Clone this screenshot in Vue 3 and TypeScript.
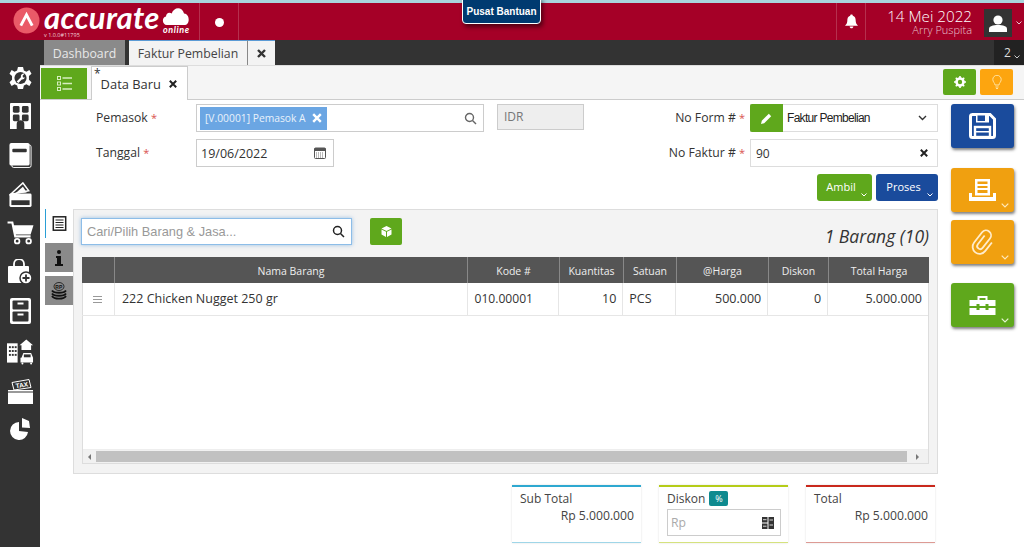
<script setup lang="ts">
interface Column {
  label: string
  width: number
}

const columns: Column[] = [
  { label: '', width: 33 },
  { label: 'Nama Barang', width: 353 },
  { label: 'Kode #', width: 92 },
  { label: 'Kuantitas', width: 64 },
  { label: 'Satuan', width: 53 },
  { label: '@Harga', width: 92 },
  { label: 'Diskon', width: 60 },
  { label: 'Total Harga', width: 100 }
]
</script>

<template>
  <div class="page">
    <div class="strip"></div>

    <!-- header -->
    <header class="header">
      <div class="logo">
        <svg class="logo-mark" width="27" height="27" viewBox="0 0 26 26">
          <circle cx="13" cy="13" r="12.5" fill="#ea5a68" />
          <path d="M7.5 18 L13 7.5 L18.5 18" fill="none" stroke="#fff" stroke-width="2.8" />
        </svg>
        <div class="logo-words">
          <span class="logo-name">accurate</span>
          <span class="logo-version">v 1.0.0#11795</span>
        </div>
        <div class="logo-cloud">
          <svg width="29" height="19" viewBox="0 0 30 20">
            <path d="M6 20 C1 20 0 12 5 11 C5 7 9 6 11 8 C13 1 22 0 24 8 C30 8 31 20 24 20 Z" fill="#fff" />
          </svg>
          <span>online</span>
        </div>
      </div>
      <div class="dot-cell"><i></i></div>
      <div class="spacer"></div>
      <div class="bell-cell">
        <svg width="13" height="15" viewBox="0 0 14 15">
          <path d="M7 0 C8 0 8.4 .6 8.4 1.3 C10.8 2 11.5 4 11.5 6.500 C11.5 9 12.3 10.5 14 12 L0 12 C1.7 10.5 2.5 9 2.5 6.5 C2.5 4 3.2 2 5.6 1.3 C5.6 .6 6 0 7 0 Z M5 13 L9 13 C9 15.5 5 15.5 5 13 Z" fill="#fff" />
        </svg>
      </div>
      <div class="who">
        <span class="who-date">14 Mei 2022</span>
        <span class="who-name">Arry Puspita</span>
      </div>
      <div class="avatar">
        <svg width="18" height="17" viewBox="0 0 18 17">
          <circle cx="9" cy="5" r="4.6" fill="#fff" />
          <path d="M0 17 V14 C0 11 4 10 9 10 C14 10 18 11 18 14 V17 Z" fill="#fff" />
        </svg>
      </div>
      <svg class="avatar-caret" width="6" height="4" viewBox="0 0 6 4">
        <path d="M.5 .5 L3 3 L5.5 .5" fill="none" stroke="#e8c8d0" stroke-width="1" />
      </svg>
    </header>
    <div class="help">Pusat Bantuan</div>

    <!-- page tabs -->
    <nav class="tabs">
      <div class="tab tab-off">Dashboard</div>
      <div class="tab tab-on">Faktur Pembelian</div>
      <div class="tab tab-close">
        <svg width="9" height="9" viewBox="0 0 9 9"><path d="M1 1 L8 8 M8 1 L1 8" stroke="#333" stroke-width="2.4" /></svg>
      </div>
      <div class="tab-count">
        2
        <svg width="6" height="4" viewBox="0 0 6 4"><path d="M.5 .5 L3 3 L5.5 .5" fill="none" stroke="#ccc" stroke-width="1" /></svg>
      </div>
    </nav>

    <div class="body">
      <!-- side menu -->
      <aside class="side">
        <svg width="23" height="22" viewBox="0 0 26 26">
          <path d="M10 0 L16 0 L17 4 L20 5.500 L23.500 3.500 L26 8 L23 10.500 L23 15 L26 18 L23.500 22.500 L20 20.500 L17 22 L16 26 L10 26 L9 22 L6 20.500 L2.500 22.500 L0 18 L3 15 L3 10.500 L0 8 L2.500 3.500 L6 5.500 L9 4 Z" fill="#fff" />
          <circle cx="13" cy="13" r="7.2" fill="#333" />
          <path d="M8.500 17 L13.500 12 A3.500 3.500 0 0 1 18 7.800 L15.500 10.300 L16 12.300 L18.300 12.500 A3.800 3.800 0 0 1 14.500 14.800 L10.500 19 Z" fill="#fff" />
        </svg>
        <svg width="21" height="26" viewBox="0 0 22 27">
          <path d="M0 1 Q0 0 1 0 H21 Q22 0 22 1 V27 H15 V22 A4 4 0 0 0 7 22 V27 H0 Z" fill="#fff" />
          <rect x="3" y="3" width="7" height="7" rx="1.5" fill="#333" />
          <rect x="12.500" y="3" width="7" height="7" rx="1.5" fill="#333" />
          <rect x="3" y="12" width="7" height="7" rx="1.5" fill="#333" />
          <rect x="12.500" y="12" width="7" height="7" rx="1.5" fill="#333" />
        </svg>
        <svg width="23" height="25" viewBox="0 0 23 26">
          <rect x="2.500" y="2" width="20" height="23.5" rx="2" fill="none" stroke="#fff" stroke-width="1" />
          <rect x="0" y="0" width="21" height="23.5" rx="2" fill="#fff" />
          <rect x="3" y="6" width="15" height="3.5" rx="1" fill="#333" />
        </svg>
        <svg width="23" height="25" viewBox="0 0 23 26">
          <path d="M1 13 L14 1 L20 9 Z" fill="none" stroke="#fff" stroke-width="1.6" />
          <path d="M6 12 L14 5 L18 11 Z" fill="#fff" />
          <rect x="0" y="12" width="23" height="14" rx="1.5" fill="#fff" />
          <rect x="2" y="19" width="19" height="5" fill="#333" />
        </svg>
        <svg width="27" height="24" viewBox="0 0 27 25">
          <path d="M0 1.500 H5 L8 16 H24" fill="none" stroke="#fff" stroke-width="2.2" />
          <path d="M6 4.500 H27 L24 14 H8 Z" fill="#fff" />
          <circle cx="10" cy="21" r="2.4" fill="none" stroke="#fff" stroke-width="1.8" />
          <circle cx="22" cy="21" r="2.4" fill="none" stroke="#fff" stroke-width="1.8" />
        </svg>
        <svg width="24" height="25" viewBox="0 0 24 25">
          <path d="M6 8 V5 A5 5 0 0 1 16 5 V8" fill="none" stroke="#fff" stroke-width="1.8" />
          <path d="M1 7 H20 Q21 7 21 8 V24 H1 Q0 24 0 23 V8 Q0 7 1 7 Z" fill="#fff" />
          <circle cx="18" cy="19" r="6" fill="#fff" stroke="#333" stroke-width="1.5" />
          <path d="M18 15.500 V22.500 M14.500 19 H21.500" stroke="#333" stroke-width="1.8" />
        </svg>
        <svg width="21" height="26" viewBox="0 0 21 26">
          <rect x="0" y="0" width="21" height="26" rx="2" fill="#fff" />
          <rect x="2.500" y="2.500" width="16" height="9" rx="1" fill="#333" />
          <rect x="2.500" y="13.500" width="16" height="10" rx="1" fill="#333" />
          <rect x="7.500" y="4.500" width="6" height="2" fill="#fff" />
          <rect x="7.500" y="15.500" width="6" height="2" fill="#fff" />
        </svg>
        <svg width="27" height="27" viewBox="0 0 28 27">
          <rect x="0" y="5" width="11" height="20" fill="#fff" />
          <g fill="#333">
            <rect x="2" y="8" width="2" height="2" /><rect x="5" y="8" width="2" height="2" /><rect x="8" y="8" width="2" height="2" />
            <rect x="2" y="12" width="2" height="2" /><rect x="5" y="12" width="2" height="2" /><rect x="8" y="12" width="2" height="2" />
            <rect x="2" y="16" width="2" height="2" /><rect x="5" y="16" width="2" height="2" /><rect x="8" y="16" width="2" height="2" />
          </g>
          <path d="M13 7 L20 1 L27 7 H25 V12 H15 V7 Z" fill="#fff" />
          <path d="M15 20 L17 15 H25 L27 20 V25 H14 V20 Z" fill="#fff" />
          <rect x="17.500" y="16.500" width="7" height="3" fill="#333" />
          <circle cx="16" cy="26" r="1" fill="#fff" /><circle cx="25" cy="26" r="1" fill="#fff" />
        </svg>
        <svg width="25" height="25" viewBox="0 0 25 25">
          <path d="M4 3.500 L21 .5 L23 8.500 L6 11 Z" fill="none" stroke="#fff" stroke-width="1" />
          <text class="tax" x="7.500" y="8.500" transform="rotate(-9 13 6)">TAX</text>
          <rect x="0" y="11" width="25" height="1.500" fill="#fff" />
          <rect x="0" y="13.500" width="25" height="11.500" fill="#fff" />
        </svg>
        <svg width="20" height="22" viewBox="0 0 20 22">
          <path d="M9 4 A9 9 0 1 0 18 14 L9 13 Z" fill="#fff" />
          <path d="M12 0 L19 3 L20 10 L12 9.500 Z" fill="#fff" />
        </svg>
      </aside>

      <main class="main">
        <div class="toolbar">
          <button class="menu-btn">
            <svg width="15" height="15" viewBox="0 0 15 15" fill="none" stroke="#d6eec0">
              <rect x=".5" y=".5" width="3" height="3" />
              <rect x=".5" y="6" width="3" height="3" />
              <rect x=".5" y="11.500" width="3" height="3" />
              <path d="M5.500 2 H15 M5.500 7.500 H15 M5.500 13 H15" stroke-width="1.5" />
            </svg>
          </button>
          <div class="doc-tab">
            <sup>*</sup>Data Baru
            <svg width="8" height="8" viewBox="0 0 8 8"><path d="M.8 .8 L7.2 7.2 M7.2 .8 L.8 7.2" stroke="#222" stroke-width="2" /></svg>
          </div>
          <div class="spacer"></div>
          <button class="tool-btn green">
            <svg width="12" height="12" viewBox="0 0 12 12">
              <circle cx="6" cy="6" r="3.5" fill="none" stroke="#fff" stroke-width="2.6" />
              <path d="M6 0 V12 M0 6 H12 M1.800 1.800 L10.200 10.200 M10.200 1.800 L1.800 10.200" stroke="#fff" stroke-width="1.6" stroke-dasharray="2 8" />
            </svg>
          </button>
          <button class="tool-btn orange">
            <svg width="10" height="14" viewBox="0 0 10 14" fill="none" stroke="#ffe1a0" stroke-width="1">
              <path d="M3 10 C3 8 .8 7 .8 4.500 A4.200 4.200 0 0 1 9.200 4.500 C9.200 7 7 8 7 10 Z" />
              <path d="M3.500 12 H6.500 M4 13.500 H6" />
            </svg>
          </button>
        </div>

        <div class="work">
          <div class="work-left">
            <section class="form">
              <div class="form-col">
                <div class="field">
                  <label class="label-left">Pemasok <b>*</b></label>
                  <div class="input supplier">
                    <span class="chip">[V.00001] Pemasok A
                      <svg width="10" height="10" viewBox="0 0 10 10"><path d="M1.200 1.200 L8.800 8.800 M8.800 1.200 L1.200 8.800" stroke="#fff" stroke-width="2.4" /></svg>
                    </span>
                    <svg class="mag" width="13" height="13" viewBox="0 0 13 13" fill="none" stroke="#666" stroke-width="1.4">
                      <circle cx="5.500" cy="5.500" r="4" /><path d="M8.500 8.500 L12 12" />
                    </svg>
                  </div>
                  <div class="currency">IDR</div>
                </div>
                <div class="field">
                  <label class="label-left">Tanggal <b>*</b></label>
                  <div class="input date">
                    <span>19/06/2022</span>
                    <svg width="12" height="12" viewBox="0 0 12 12">
                      <rect x=".5" y="1" width="11" height="10.5" rx="1" fill="#fff" stroke="#555" />
                      <rect x=".5" y="1" width="11" height="3" fill="#555" />
                      <path d="M2 6 H10 M2 8 H10 M2 10 H10" stroke="#777" stroke-dasharray="1 1" />
                    </svg>
                  </div>
                </div>
              </div>
              <div class="form-col form-right">
                <div class="field">
                  <label class="label-right">No Form # <b>*</b></label>
                  <div class="input pick">
                    <button class="pen-btn">
                      <svg width="13" height="13" viewBox="0 0 13 13">
                        <path d="M1 12 L1.800 8.800 L8.800 1.800 L11.200 4.200 L4.200 11.200 Z" fill="#fff" />
                      </svg>
                    </button>
                    <span class="pick-text">Faktur Pembelian</span>
                    <svg width="9" height="6" viewBox="0 0 9 6"><path d="M1 1 L4.500 4.500 L8 1" fill="none" stroke="#333" stroke-width="1.4" /></svg>
                  </div>
                </div>
                <div class="field">
                  <label class="label-right">No Faktur # <b>*</b></label>
                  <div class="input faktur">
                    <span>90</span>
                    <svg width="8" height="8" viewBox="0 0 8 8"><path d="M.8 .8 L7.2 7.2 M7.2 .8 L.8 7.2" stroke="#222" stroke-width="2" /></svg>
                  </div>
                </div>
                <div class="form-actions">
                  <button class="act-btn act-green">Ambil
                    <svg width="6" height="4" viewBox="0 0 6 4"><path d="M.5 .5 L3 3 L5.5 .5" fill="none" stroke="#fff" /></svg>
                  </button>
                  <button class="act-btn act-blue">Proses
                    <svg width="6" height="4" viewBox="0 0 6 4"><path d="M.5 .5 L3 3 L5.5 .5" fill="none" stroke="#fff" /></svg>
                  </button>
                </div>
              </div>
            </section>

            <section class="detail">
              <div class="vtabs">
                <div class="vtab vtab-on">
                  <svg width="15" height="15" viewBox="0 0 14 15" fill="none" stroke="#222">
                    <rect x=".8" y=".8" width="12.4" height="13.4" stroke-width="1.5" />
                    <path d="M3 4 H11 M3 6.500 H11 M3 9 H11 M3 11.500 H11" stroke-width="1.2" />
                  </svg>
                </div>
                <div class="vtab">
                  <svg width="8" height="16" viewBox="0 0 8 16" fill="#111">
                    <circle cx="4" cy="2" r="2" /><path d="M1 6 H6 V14 H8 V16 H0 V14 H2 V8 H1 Z" />
                  </svg>
                </div>
                <div class="vtab vtab-rp">
                  <svg width="16" height="18" viewBox="0 0 16 18">
                    <ellipse cx="8" cy="4.500" rx="5" ry="4" fill="none" stroke="#111" stroke-width=".8" />
                    <text class="rp" x="4.300" y="6.500">RP</text>
                    <path d="M1 8.500 C3 11.500 13 11.500 15 8.500 M1 11.500 C3 14.500 13 14.500 15 11.500 M1 14 C3 17.500 13 17.500 15 14" fill="none" stroke="#111" stroke-width="1.8" />
                  </svg>
                </div>
              </div>
              <div class="panel">
                <div class="panel-top">
                  <div class="search">
                    <span>Cari/Pilih Barang &amp; Jasa...</span>
                    <svg width="13" height="13" viewBox="0 0 13 13" fill="none" stroke="#222" stroke-width="1.5">
                      <circle cx="5.500" cy="5.500" r="4" /><path d="M8.500 8.500 L12 12" />
                    </svg>
                  </div>
                  <button class="cube-btn">
                    <svg width="11" height="11" viewBox="0 0 11 11">
                      <path d="M5.500 0 L10.500 2.500 L5.500 5 L.5 2.500 Z M.5 3.500 L5 5.800 V11 L.5 8.500 Z M10.500 3.500 L6 5.800 V11 L10.500 8.500 Z" fill="#fff" />
                    </svg>
                  </button>
                  <div class="spacer"></div>
                  <div class="count">1 Barang (10)</div>
                </div>
                <div class="table">
                  <div class="thead">
                    <div v-for="col in columns" :key="col.label" class="th" :style="{ width: col.width + 'px' }">{{ col.label }}</div>
                  </div>
                  <div class="tr">
                    <div class="td td-drag" :style="{ width: columns[0].width + 'px' }"><i></i></div>
                    <div class="td" :style="{ width: columns[1].width + 'px' }">222 Chicken Nugget 250 gr</div>
                    <div class="td td-code" :style="{ width: columns[2].width + 'px' }">010.00001</div>
                    <div class="td num" :style="{ width: columns[3].width + 'px' }">10</div>
                    <div class="td" :style="{ width: columns[4].width + 'px' }">PCS</div>
                    <div class="td num" :style="{ width: columns[5].width + 'px' }">500.000</div>
                    <div class="td num" :style="{ width: columns[6].width + 'px' }">0</div>
                    <div class="td num" :style="{ width: columns[7].width + 'px' }">5.000.000</div>
                  </div>
                  <div class="tfill"></div>
                  <div class="hscroll">
                    <span class="arrow-l"></span>
                    <div class="thumb"></div>
                    <span class="arrow-r"></span>
                  </div>
                </div>
              </div>
            </section>

            <section class="totals">
              <div class="total-card c-blue">
                <div class="total-title">Sub Total</div>
                <div class="total-value">Rp 5.000.000</div>
              </div>
              <div class="total-card c-lime">
                <div class="total-title">Diskon <span class="pct">%</span></div>
                <div class="disc-input">
                  <span>Rp</span>
                  <svg width="12" height="12" viewBox="0 0 12 12" fill="#333">
                    <rect x="0" y="0" width="5.500" height="5.500" /><rect x="6.500" y="0" width="5.500" height="12" />
                    <rect x="0" y="6.500" width="5.500" height="5.500" />
                    <path d="M1 2.700 H4.500 M1 9.200 H4.500 M7.500 3 H11 M7.500 8 H11" stroke="#fff" stroke-width=".8" />
                  </svg>
                </div>
              </div>
              <div class="total-card c-red">
                <div class="total-title">Total</div>
                <div class="total-value">Rp 5.000.000</div>
              </div>
            </section>
          </div>

          <div class="quick">
            <button class="quick-btn q-blue">
              <svg width="27" height="26" viewBox="0 0 27 26">
                <path d="M3 1.500 H21 L25.500 6 V22.500 Q25.500 24.500 23.500 24.500 H3.500 Q1.500 24.500 1.500 22.500 V3.500 Q1.500 1.500 3.500 1.500 Z" fill="none" stroke="#fff" stroke-width="3" />
                <path d="M7 2 V9.500 H20 V2" fill="#fff" />
                <rect x="8.500" y="2.500" width="7.500" height="5.500" fill="#1a4b9c" />
                <rect x="6" y="14" width="15" height="10" fill="none" stroke="#fff" stroke-width="2.4" />
                <rect x="6" y="18" width="15" height="1.500" fill="#fff" />
              </svg>
            </button>
            <button class="quick-btn q-orange gap-small">
              <svg width="27" height="22" viewBox="0 0 27 22" fill="#fff">
                <path d="M0 14 H3 V18 H24 V14 H27 V22 H0 Z" />
                <path d="M6 0 H21 V16.500 H6 Z M8.500 2.500 V5 H18.500 V2.500 Z M8.500 7 V9 H18.500 V7 Z M8.500 11 V14 H18.500 V11 Z" fill-rule="evenodd" />
              </svg>
              <svg class="q-caret" width="8" height="5" viewBox="0 0 8 5"><path d="M.7 .7 L4 4 L7.300 .7" fill="none" stroke="#ffe9bd" stroke-width="1.2" /></svg>
            </button>
            <button class="quick-btn q-orange">
              <svg width="26" height="27" viewBox="0 0 26 27">
                <path d="M10 7 V18 A3 3 0 0 0 16 18 V6 A5 5 0 0 0 6 6 V19 A7 7 0 0 0 20 19 V8" transform="rotate(38 13 13.500)" fill="none" stroke="#ffeccc" stroke-width="1.8" />
              </svg>
              <svg class="q-caret" width="8" height="5" viewBox="0 0 8 5"><path d="M.7 .7 L4 4 L7.300 .7" fill="none" stroke="#ffe9bd" stroke-width="1.2" /></svg>
            </button>
            <button class="quick-btn q-green gap-big">
              <svg width="27" height="19" viewBox="0 0 26 19" fill="#fff">
                <path d="M8 0 H18 V4 H26 V10 H19 V8 H16 V10 H10 V8 H7 V10 H0 V4 H8 Z M10 2 V4 H16 V2 Z" fill-rule="evenodd" />
                <path d="M0 12 H7 V14 H10 V12 H16 V14 H19 V12 H26 V19 H0 Z" />
              </svg>
              <svg class="q-caret" width="8" height="5" viewBox="0 0 8 5"><path d="M.7 .7 L4 4 L7.300 .7" fill="none" stroke="#e6f5d4" stroke-width="1.2" /></svg>
            </button>
          </div>
        </div>
      </main>
    </div>
  </div>
</template>

<style>
html,
body {
  margin: 0;
  background: #fff;
}
</style>

<style scoped>
* {
  box-sizing: border-box;
}

.page {
  position: relative;
  width: 1024px;
  height: 547px;
  overflow: hidden;
  display: flex;
  flex-direction: column;
  font-family: "Open Sans", "Noto Sans", sans-serif;
  font-size: 12px;
  color: #333;
}

button {
  border: none;
  padding: 0;
  font-family: inherit;
  cursor: pointer;
}

.spacer {
  flex: 1;
}

.strip {
  height: 3px;
  background: #a9d5dd;
}

/* header */
.header {
  height: 37px;
  background: #a50027;
  display: flex;
  align-items: stretch;
  color: #fff;
}

.logo {
  width: 200px;
  display: flex;
  padding-left: 13px;
  border-right: 1px solid #b5304e;
}

.logo-mark {
  margin-top: 4px;
}

.logo-words {
  display: flex;
  flex-direction: column;
  margin-left: 4px;
}

.logo-name {
  font-family: Lato, sans-serif;
  font-style: italic;
  font-weight: 700;
  font-size: 31px;
  line-height: 29px;
  letter-spacing: 0.3px;
}

.logo-version {
  font-size: 5.5px;
  line-height: 6px;
  color: #f0d0d8;
}

.logo-cloud {
  display: flex;
  flex-direction: column;
  align-items: flex-end;
  margin-left: 1px;
  margin-top: 3px;
}

.logo-cloud span {
  font-family: Lato, sans-serif;
  font-style: italic;
  font-weight: 700;
  font-size: 9px;
  line-height: 9px;
  letter-spacing: 0.6px;
}

.dot-cell {
  width: 39px;
  border-right: 1px solid #b5304e;
  display: flex;
  align-items: center;
  justify-content: center;
}

.dot-cell i {
  width: 9px;
  height: 9px;
  border-radius: 50%;
  background: #fff;
  margin-top: 2px;
}

.bell-cell {
  width: 30px;
  border-left: 1px solid #b5304e;
  border-right: 1px solid #b5304e;
  display: flex;
  align-items: center;
  justify-content: center;
}

.who {
  width: 106px;
  display: flex;
  flex-direction: column;
  align-items: flex-end;
  padding-top: 6px;
}

.who-date {
  font-size: 15.2px;
  font-weight: 300;
  line-height: 15px;
}

.who-name {
  font-size: 11px;
  font-weight: 300;
  line-height: 12px;
  color: #e8c6cf;
}

.avatar {
  width: 28px;
  height: 28px;
  margin: 6px 0 0 12px;
  background: #333;
  display: flex;
  align-items: center;
  justify-content: center;
}

.avatar-caret {
  margin: 18px 2px 0 4px;
}

.help {
  position: absolute;
  left: 462px;
  top: -3px;
  width: 79px;
  height: 27px;
  padding-top: 7px;
  text-align: center;
  background: #003a70;
  border: 1px solid #fff;
  border-radius: 0 0 4px 4px;
  box-shadow: 2px 3px 4px rgba(0, 0, 0, 0.5);
  color: #fff;
  font-family: "Liberation Sans", sans-serif;
  font-weight: 700;
  font-size: 10px;
  line-height: 14px;
}

/* tabs */
.tabs {
  height: 25px;
  background: #333;
  display: flex;
  padding-left: 44px;
}

.tab {
  display: flex;
  align-items: center;
  justify-content: center;
  font-size: 12.3px;
}

.tab-off {
  width: 81px;
  margin-right: 4px;
  background: #8a8a8a;
  color: #e8e8e8;
  border-top: 1px solid #8a8a8a;
}

.tab-on {
  width: 119px;
  background: #f3f3f3;
  border-top: 1px solid #5b9bd5;
  border-right: 1px solid #888;
  color: #444;
}

.tab-close {
  width: 27px;
  background: #f3f3f3;
  border-top: 1px solid #5b9bd5;
}

.tab-count {
  margin-left: auto;
  width: 30px;
  background: #222;
  color: #ddd;
  display: flex;
  align-items: center;
  justify-content: center;
  gap: 3px;
  padding-left: 6px;
}

.tab-count svg {
  margin-top: 8px;
}

/* layout */
.body {
  flex: 1;
  display: flex;
  min-height: 0;
}

.side {
  width: 40px;
  flex: none;
  background: #333;
  display: flex;
  flex-direction: column;
  align-items: center;
  gap: 14px;
  padding-top: 2px;
}

.side svg {
  flex: none;
}

.tax {
  font-family: "Liberation Sans", sans-serif;
  font-size: 6.5px;
  font-weight: 700;
  fill: #fff;
}

.rp {
  font-family: "Liberation Sans", sans-serif;
  font-size: 5px;
  font-weight: 700;
  fill: #111;
}

.main {
  flex: 1;
  min-width: 0;
  display: flex;
  flex-direction: column;
}

.toolbar {
  height: 35px;
  background: #f5f5f5;
  border-top: 1px solid #ddd;
  border-bottom: 1px solid #ccc;
  display: flex;
  padding-left: 1px;
}

.menu-btn {
  width: 46px;
  height: 31px;
  margin-top: 2px;
  background: #5fa81c;
  display: flex;
  align-items: center;
  justify-content: center;
}

.doc-tab {
  width: 97px;
  height: 34px;
  margin-left: 4px;
  background: #fff;
  border: 1px solid #ccc;
  border-bottom: none;
  display: flex;
  align-items: center;
  font-size: 12.9px;
  color: #333;
  padding-left: 2px;
}

.doc-tab sup {
  font-size: 12px;
  line-height: 12px;
  align-self: flex-start;
  margin-top: 1px;
}

.doc-tab svg {
  margin-left: 8px;
}

.tool-btn {
  width: 33px;
  height: 26px;
  margin-top: 3px;
  border-radius: 2px;
  display: flex;
  align-items: center;
  justify-content: center;
}

.tool-btn.green {
  background: #5fa81c;
  margin-right: 4px;
}

.tool-btn.orange {
  background: #fda50f;
  margin-right: 11px;
}

.work {
  flex: 1;
  min-height: 0;
  display: flex;
}

.work-left {
  width: 911px;
  display: flex;
  flex-direction: column;
}

/* form */
.form {
  height: 109px;
  padding: 4px 13px 0 56px;
  display: flex;
  justify-content: space-between;
}

.form-col {
  display: flex;
  flex-direction: column;
  gap: 7px;
}

.form-right {
  align-items: flex-end;
}

.field {
  display: flex;
  align-items: flex-start;
}

label {
  font-size: 12.2px;
  color: #333;
  line-height: 27px;
}

label b {
  color: #d9534f;
  font-weight: 400;
  font-size: 11px;
}

.label-left {
  width: 100px;
}

.label-right {
  margin-right: 5px;
}

.input {
  height: 28px;
  background: #fff;
  border: 1px solid #ccc;
  display: flex;
  align-items: center;
}

.supplier {
  width: 288px;
  padding: 3px 5px 3px 3px;
  justify-content: space-between;
}

.chip {
  height: 23px;
  width: 127px;
  background: #6ba6e3;
  color: #e9f2fb;
  font-size: 10.3px;
  display: flex;
  align-items: center;
  justify-content: space-between;
  padding: 0 5px;
  white-space: nowrap;
}

.mag {
  margin-right: 1px;
}

.currency {
  width: 87px;
  height: 26px;
  margin-left: 13px;
  background: #eee;
  border: 1px solid #ccc;
  color: #777;
  font-size: 12px;
  line-height: 24px;
  padding-left: 6px;
}

.date {
  width: 138px;
  justify-content: space-between;
  padding: 0 7px 0 4px;
  font-size: 12.5px;
}

.pick {
  width: 188px;
  padding-right: 10px;
  border-color: #ddd;
}

.pen-btn {
  width: 33px;
  height: 28px;
  margin: -1px 0 -1px -1px;
  background: #5fa81c;
  border-radius: 2px 0 0 2px;
  display: flex;
  align-items: center;
  justify-content: center;
}

.pick-text {
  flex: 1;
  padding-left: 4px;
  font-family: "Liberation Sans", sans-serif;
  font-size: 12px;
  letter-spacing: -0.7px;
  color: #222;
}

.faktur {
  width: 188px;
  justify-content: space-between;
  padding: 0 9px 0 5px;
  border-color: #ddd;
}

.form-actions {
  display: flex;
  gap: 4px;
}

.act-btn {
  height: 27px;
  border-radius: 3px;
  color: #fff;
  font-size: 11px;
  position: relative;
  padding-bottom: 2px;
}

.act-btn svg {
  position: absolute;
  right: 5px;
  bottom: 4px;
}

.act-green {
  width: 55px;
  background: #5fa81c;
  padding-right: 7px;
}

.act-blue {
  width: 62px;
  background: #1a4b9c;
  padding-right: 7px;
}

/* detail panel */
.detail {
  height: 265px;
  padding-left: 5px;
  display: flex;
}

.vtabs {
  width: 28px;
  display: flex;
  flex-direction: column;
  background: #fff;
}

.vtab {
  height: 29px;
  width: 28px;
  background: #8a8a8a;
  display: flex;
  align-items: center;
  justify-content: center;
  margin-bottom: 4px;
}

.vtab-on {
  height: 29px;
  margin-bottom: 5px;
  background: #fff;
  border-left: 1px solid #2a9fd6;
}

.panel {
  width: 865px;
  background: #f3f3f3;
  border: 1px solid #ddd;
  padding: 8px 8px 9px 7px;
  display: flex;
  flex-direction: column;
}

.panel-top {
  height: 39px;
  display: flex;
  align-items: flex-start;
}

.search {
  width: 271px;
  height: 27px;
  background: #fff;
  border: 1px solid #8dbde8;
  box-shadow: 0 0 4px rgba(91, 155, 213, 0.6);
  display: flex;
  align-items: center;
  justify-content: space-between;
  padding: 0 6px 0 5px;
  font-family: "Liberation Sans", sans-serif;
  font-size: 12.8px;
  color: #999;
}

.cube-btn {
  width: 32px;
  height: 27px;
  margin-left: 18px;
  background: #5fa81c;
  border-radius: 2px;
  display: flex;
  align-items: center;
  justify-content: center;
}

.count {
  font-size: 17.5px;
  font-style: italic;
  color: #333;
  line-height: 36px;
}

.table {
  flex: 1;
  min-height: 0;
  background: #fff;
  border: 1px solid #ddd;
  border-top: none;
  display: flex;
  flex-direction: column;
  margin-left: 1px;
}

.thead {
  height: 26px;
  background: #555;
  display: flex;
  margin: 0 -1px;
}

.th {
  color: #eee;
  font-size: 10.5px;
  line-height: 28px;
  text-align: center;
  border-right: 1px solid #888;
}

.th:last-child {
  border-right: none;
}

.tr {
  height: 33px;
  display: flex;
  border-bottom: 1px solid #e6e6e6;
  margin-left: -1px;
}

.td {
  font-size: 12.5px;
  line-height: 32px;
  padding: 0 6px;
  border-right: 1px solid #e6e6e6;
  white-space: nowrap;
  color: #333;
}

.td:last-child {
  border-right: none;
}

.td:nth-child(2) {
  padding-left: 7px;
}

.td-code {
  font-size: 12.1px;
  padding-left: 7px;
}

.td-drag {
  display: flex;
  align-items: center;
  justify-content: center;
}

.td-drag i {
  width: 9px;
  height: 7px;
  border-top: 1px solid #999;
  border-bottom: 1px solid #999;
  position: relative;
}

.td-drag i::after {
  content: "";
  position: absolute;
  left: 0;
  right: 0;
  top: 2px;
  height: 1px;
  background: #999;
}

.num {
  text-align: right;
}

.tfill {
  flex: 1;
}

.hscroll {
  height: 14px;
  background: #f1f1f1;
  display: flex;
  align-items: center;
  border-top: 1px solid #eee;
  padding: 0 1px;
}

.thumb {
  flex: 1;
  height: 11px;
  background: #c1c1c1;
  margin: 0 5px;
}

.arrow-l {
  width: 0;
  height: 0;
  margin-left: 4px;
  border: 3px solid transparent;
  border-right-color: #777;
  border-left: none;
}

.arrow-r {
  width: 0;
  height: 0;
  margin-right: 8px;
  margin-left: 4px;
  border: 3px solid transparent;
  border-left-color: #777;
  border-right: none;
}

/* totals */
.totals {
  display: flex;
  gap: 18px;
  padding: 11px 0 0 472px;
}

.total-card {
  width: 129px;
  height: 58px;
  padding: 3px 7px 3px 8px;
  border-top: 2px solid;
  border-bottom: 1px solid;
  box-shadow: 0 0 2px rgba(0, 0, 0, 0.12);
  background: #fff;
}

.c-blue {
  border-top-color: #2ea8d0;
  border-bottom-color: #9fd6e8;
}

.c-lime {
  border-top-color: #b5cc18;
  border-bottom-color: #d5e27e;
}

.c-red {
  border-top-color: #c9281c;
  border-bottom-color: #dd9a94;
}

.total-title {
  font-size: 12px;
  line-height: 18px;
  color: #444;
}

.total-value {
  font-size: 12.2px;
  line-height: 16px;
  text-align: right;
  color: #444;
}

.pct {
  display: inline-block;
  width: 19px;
  height: 15px;
  margin-left: 1px;
  background: #0e8a8f;
  border-radius: 2px;
  color: #fff;
  font-size: 9px;
  line-height: 15px;
  text-align: center;
  vertical-align: 1px;
}

.disc-input {
  height: 27px;
  margin-top: 1px;
  border: 1px solid #ccc;
  display: flex;
  align-items: center;
  justify-content: space-between;
  padding: 0 6px 0 3px;
  color: #aaa;
  font-size: 12.2px;
}

/* quick buttons */
.quick {
  display: flex;
  flex-direction: column;
  padding-top: 4px;
}

.quick-btn {
  position: relative;
  width: 63px;
  height: 44px;
  border-radius: 3px;
  box-shadow: 1px 2px 3px rgba(0, 0, 0, 0.5);
  display: flex;
  align-items: center;
  justify-content: center;
  margin-bottom: 8px;
  flex: none;
}

.gap-small {
  margin-top: 12px;
}

.gap-big {
  margin-top: 11px;
}

.q-blue {
  background: #1a4b9c;
}

.q-orange {
  background: #f0a010;
}

.q-green {
  background: #5fa81c;
}

.q-caret {
  position: absolute;
  right: 5px;
  bottom: 4px;
}
</style>
